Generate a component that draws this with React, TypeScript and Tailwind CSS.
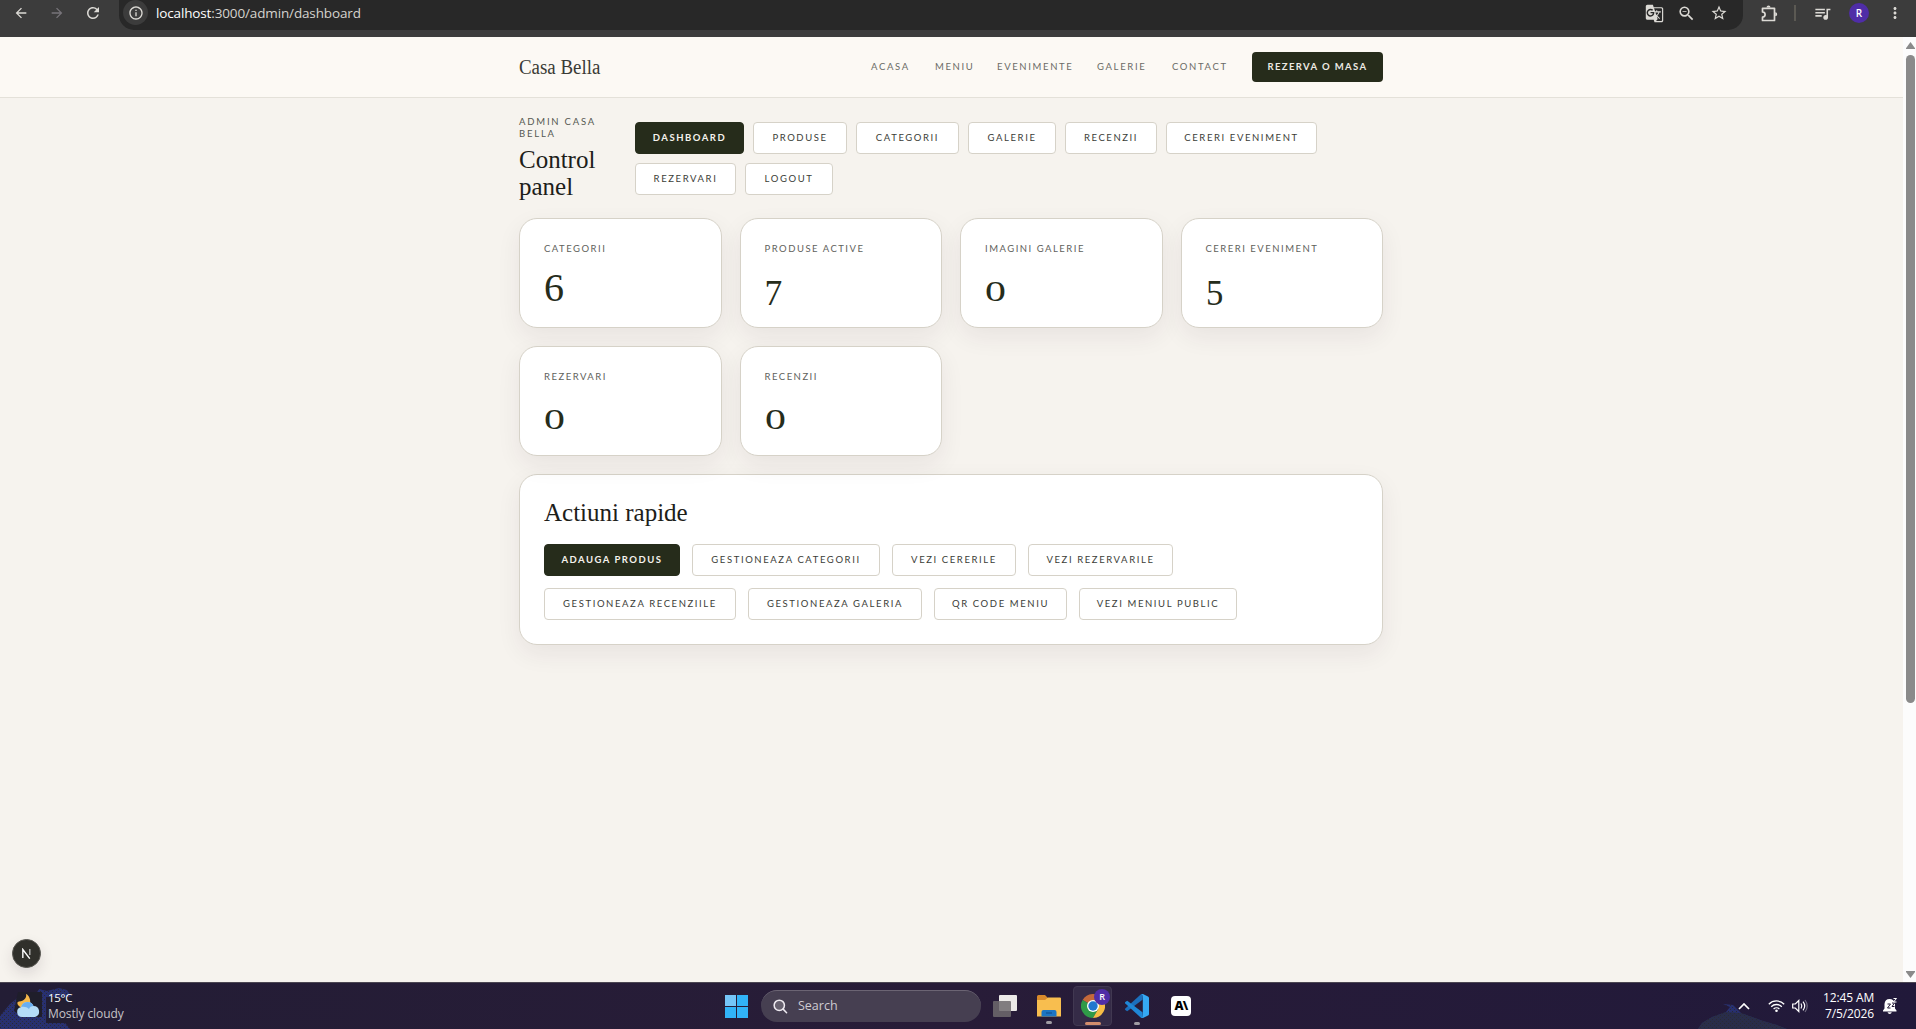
import clsx from "clsx";
import {
  MdArrowBack,
  MdArrowForward,
  MdGTranslate,
  MdInfoOutline,
  MdMoreVert,
  MdQueueMusic,
  MdRefresh,
  MdStarBorder,
  MdZoomOut,
} from "react-icons/md";

interface ButtonItem {
  label: string;
  width: string;
  primary?: boolean;
}

interface StatItem {
  label: string;
  value: number;
  digit: string;
}

const navLinks: ButtonItem[] = [
  { label: "Acasa", width: "w-[39px]" },
  { label: "Meniu", width: "w-[37px]" },
  { label: "Evenimente", width: "w-[75px]" },
  { label: "Galerie", width: "w-[50px]" },
  { label: "Contact", width: "w-[55px]" },
];

const adminLinks: ButtonItem[] = [
  { label: "Dashboard", width: "w-[109px]", primary: true },
  { label: "Produse", width: "w-[94px]" },
  { label: "Categorii", width: "w-[103px]" },
  { label: "Galerie", width: "w-[88px]" },
  { label: "Recenzii", width: "w-[92px]" },
  { label: "Cereri eveniment", width: "w-[151px]" },
  { label: "Rezervari", width: "w-[101px]" },
  { label: "Logout", width: "w-[88px]" },
];

const quickActions: ButtonItem[] = [
  { label: "Adauga produs", width: "w-[136px]", primary: true },
  { label: "Gestioneaza categorii", width: "w-[188px]" },
  { label: "Vezi cererile", width: "w-[124px]" },
  { label: "Vezi rezervarile", width: "w-[145px]" },
  { label: "Gestioneaza recenziile", width: "w-[192px]" },
  { label: "Gestioneaza galeria", width: "w-[174px]" },
  { label: "QR code meniu", width: "w-[133px]" },
  { label: "Vezi meniul public", width: "w-[158px]" },
];

// old-style figures: each digit has its own height and drop
const six = "text-[40px] -translate-y-[2px]";
const zero = "text-[29.5px] scale-x-[1.42] -translate-y-[2px]";
const seven = "text-[35.5px] translate-y-[2px]";
const five = "text-[36.5px] scale-x-[0.95] translate-y-[2px]";

const stats: StatItem[] = [
  { label: "Categorii", value: 6, digit: six },
  { label: "Produse active", value: 7, digit: seven },
  { label: "Imagini galerie", value: 0, digit: zero },
  { label: "Cereri eveniment", value: 5, digit: five },
  { label: "Rezervari", value: 0, digit: zero },
  { label: "Recenzii", value: 0, digit: zero },
];

const PuzzleIcon = () => (
  <svg viewBox="0 0 17 17" className="ml-[18px] size-[17px]" fill="none" stroke="currentColor" strokeWidth="1.700">
    <path d="M1.500 3.300h12v12.200h-12v-3.300a2.600 2.600 0 0 0 0-5.200z" strokeLinejoin="round" />
    <path d="M5.500 2.600a2 2 0 0 1 4 0zM14.200 7.300a2 2 0 0 1 0 4z" fill="currentColor" stroke="none" />
  </svg>
);

const BrowserBar = () => (
  <div className="flex h-[37px] shrink-0 items-start bg-[#3c3c3c] text-[#dcdad5]">
    <div className="flex h-[26px] w-[119px] items-center">
      <MdArrowBack className="ml-[13px] size-4" />
      <MdArrowForward className="ml-5 size-4 text-[#77747a]" />
      <MdRefresh className="ml-[19px] size-[18px]" />
    </div>
    <div className="flex h-[30px] w-[1624px] rounded-b-[15px] bg-[#282828]">
      <div className="ml-1 flex size-[25px] items-center justify-center rounded-full bg-[#3c3c3c]">
        <MdInfoOutline className="size-4" />
      </div>
      <span className="ml-2 font-['Open_Sans',sans-serif] text-[13.5px] leading-[27px] tracking-[-0.14px] text-[#d5d3cf]">
        <span className="text-white">localhost</span>:3000/admin/dashboard
      </span>
      <div className="ml-auto flex h-[26px] items-center">
        <MdGTranslate className="size-[19px]" />
        <MdZoomOut className="ml-[13px] size-[19px]" />
        <MdStarBorder className="mr-[15px] ml-[14px] size-[18px]" />
      </div>
    </div>
    <div className="flex h-[26px] flex-1 items-center">
      <PuzzleIcon />
      <span className="ml-4 h-4 w-0.5 bg-[#5b5953]" />
      <MdQueueMusic className="ml-[17px] size-[19px]" />
      <span className="ml-[17px] flex size-5 items-center justify-center rounded-full bg-[#4f2da7] font-['Open_Sans',sans-serif] text-[10px] font-semibold text-white">
        R
      </span>
      <MdMoreVert className="ml-[17px] size-[18px]" />
    </div>
  </div>
);

const PillButton = ({ item }: { item: ButtonItem }) => (
  <button
    className={clsx(
      "flex h-8 shrink-0 items-center justify-center rounded-[4px] border pt-px text-[9.5px] whitespace-nowrap uppercase",
      item.width,
      item.primary
        ? "border-[#262c1b] bg-[#262c1b] font-bold tracking-[1.5px] text-[#f5f2ed]"
        : "border-[#d6d2c8] bg-white tracking-[1.6px] text-[#3b3d37]",
    )}
  >
    {item.label}
  </button>
);

const SiteHeader = () => (
  <header className="h-[61px] border-b border-[#e4e1d9] bg-[#fcf9f4] pr-px">
    <div className="mx-auto flex h-[60px] w-[864px] items-center">
      <span className="origin-left scale-x-[0.945] pb-px font-['Liberation_Serif',serif] text-[20px] text-[#3a3b35]">
        Casa Bella
      </span>
      <nav className="ml-auto flex gap-[25px] text-[9.5px] text-[#6b6b66] uppercase">
        {navLinks.map((link) => (
          <span
            key={link.label}
            className={clsx("tracking-[1.65px] whitespace-nowrap", link.width)}
          >
            {link.label}
          </span>
        ))}
      </nav>
      <button className="ml-[25px] h-[30px] w-[131px] rounded-[4px] bg-[#262c1b] text-[9.5px] font-bold tracking-[1.4px] whitespace-nowrap text-[#ece9e3] uppercase">
        Rezerva o masa
      </button>
    </div>
  </header>
);

const StatCard = ({ stat }: { stat: StatItem }) => (
  <div className="h-[110px] rounded-[18px] border border-[#d6d2c8] bg-white pt-6 pl-6 shadow-[0_9px_24px_rgba(50,30,50,0.07)]">
    <p className="text-[9.5px] leading-3 tracking-[1.5px] text-[#5f625c] uppercase">
      {stat.label}
    </p>
    <p className="mt-[12px] flex h-9 items-baseline leading-9">
      <span className="inline-block h-9 w-0 text-[40px]" />
      <span
        className={clsx(
          "inline-block origin-left font-['Liberation_Serif',serif] leading-9 text-[#262c1b]",
          stat.digit,
        )}
      >
        {stat.value}
      </span>
    </p>
  </div>
);

const Dashboard = () => (
  <div className="pr-px">
    <main className="mx-auto w-[864px]">
      <div className="flex h-[120px] pt-[18px]">
        <div className="w-[116px]">
          <p className="w-[90px] text-[9.5px] leading-3 tracking-[1.8px] text-[#555851] uppercase">
            Admin Casa Bella
          </p>
          <h1 className="mt-[6px] w-[90px] origin-left font-['Liberation_Serif',serif] text-[25px] leading-[27px] text-[#1d2019]">
            Control panel
          </h1>
        </div>
        <div className="mt-[6px] flex flex-1 flex-wrap content-start gap-[9px]">
          {adminLinks.map((item) => (
            <PillButton key={item.label} item={item} />
          ))}
        </div>
      </div>
      <section className="grid grid-cols-4 gap-[18px]">
        {stats.map((stat) => (
          <StatCard key={stat.label} stat={stat} />
        ))}
      </section>
      <section className="mt-[18px] h-[171px] rounded-[18px] border border-[#d6d2c8] bg-white px-6 pt-6 shadow-[0_9px_24px_rgba(50,30,50,0.07)]">
        <h2 className="origin-left font-['Liberation_Serif',serif] text-[25px] leading-7 text-[#1d2019]">
          Actiuni rapide
        </h2>
        <div className="mt-[17px] flex w-[740px] flex-wrap gap-3">
          {quickActions.map((item) => (
            <PillButton key={item.label} item={item} />
          ))}
        </div>
      </section>
    </main>
  </div>
);

const Scrollbar = () => (
  <div className="flex w-[13px] flex-col items-center bg-[#fcfcfc] pt-[5px] pb-1 pl-0.5">
    <svg className="h-2 w-[9px] shrink-0" viewBox="0 0 9 8" fill="#8a8a8a">
      <path d="M4.500 0 9 6.200V7H0v-.8z" />
    </svg>
    <div className="mt-[5px] h-[648px] w-[9px] shrink-0 rounded-full bg-[#8a8a8a]" />
    <svg className="mt-auto h-[7px] w-[9px] shrink-0" viewBox="0 0 9 7" fill="#8a8a8a">
      <path d="M4.500 7 9 1V0H0v1z" />
    </svg>
  </div>
);

const DevBadge = () => (
  <div className="absolute bottom-[14px] left-3 flex size-[29px] items-center justify-center rounded-full border border-[#55544f] bg-[#30302b] shadow-[0_6px_14px_rgba(50,30,50,0.12)]">
    <svg viewBox="0 0 12 12" className="size-[11px]" fill="none" stroke="#fff" strokeWidth="1.500">
      <path d="M2 11V1.600L9.600 11.600" />
      <path d="M9.600 1v6.500" strokeOpacity=".65" />
    </svg>
  </div>
);

const WeatherIcon = () => (
  <svg viewBox="0 0 25 24" className="h-6 w-[25px]">
    <path d="M10 0c1 4-2 7-7 7.500C1 8 1 9 2 11c3 4 10 4 12-1 1-4-1-9-4-10z" fill="#f5b84a" />
    <path
      d="M6 23a5 5 0 0 1-.8-9.900A6.500 6.500 0 0 1 17.500 12a5.600 5.600 0 0 1 1.500 11z"
      fill="#b4dcf7"
    />
    <path d="M5.200 13.100A6.500 6.500 0 0 1 17.500 12c-2 0-4 1-4.500 3-2-2-5-2.500-7.800-1.900z" fill="#69aef0" />
  </svg>
);

const FolderIcon = () => (
  <svg viewBox="0 0 24 22" className="h-[22px] w-6">
    <path d="M0 1.500Q0 0 1.500 0H8l3 3h3v5H0z" fill="#d98a2b" />
    <path d="M0 5h8l3-2.500h12q1 0 1 1V21.500H0z" fill="#f8be4f" />
    <path d="M4.500 21.500V17q0-2 2-2h11q2 0 2 2v4.500z" fill="#1c75c4" />
    <path d="M9 18h6" stroke="#124f91" strokeWidth="1.200" />
  </svg>
);

const ChromeIcon = () => (
  <svg viewBox="0 0 24 24" className="size-6">
    <path d="M12 12 1.600 6A12 12 0 0 1 22.400 6z" fill="#c4683a" />
    <path d="M12 12 1.600 6A12 12 0 0 0 12 24l5.200-9z" fill="#2f9a48" />
    <path d="M12 6h10.400A12 12 0 0 1 12 24l5.200-9z" fill="#f7bd45" />
    <circle cx="12" cy="12" r="6" fill="#fff" />
    <circle cx="12" cy="12" r="4.700" fill="#2277cf" />
  </svg>
);

const CodeIcon = () => (
  <svg viewBox="0 0 24 24" className="size-6">
    <path d="M17.500 5.700 2.200 17.200.300 16q-.6-.7 0-1.400L16.200 0H18z" fill="#1b6fbd" />
    <path d="M17.500 18.300 2.200 6.800.300 8q-.6.700 0 1.400L16.200 24H18z" fill="#1f87d6" />
    <path d="m16.800.300 1.200-.2 5 2.400q1 .5 1 1.500v16q0 1-1 1.500l-5 2.400-1.200-.2q1 .2 1-1V1.500z" fill="#35a9f4" />
  </svg>
);

const RunningDot = () => (
  <span className="absolute -bottom-[7px] left-1/2 h-[3px] w-1.5 -translate-x-1/2 rounded-full bg-[#a09ca3]" />
);

const Taskbar = () => (
  <footer className="relative flex h-[47px] shrink-0 items-center overflow-hidden border-t border-[#4b4652] bg-linear-to-r from-[#231d35] via-[#281c38] to-[#21193a] font-['Open_Sans',sans-serif]">
    <svg className="absolute bottom-0 left-0 h-[46px] w-[100px]" viewBox="0 0 100 46">
      <defs>
        <pattern id="dots" width="4" height="4" patternUnits="userSpaceOnUse">
          <rect width="4" height="4" fill="#283070" />
          <rect width="1" height="1" fill="#282a31" />
          <rect x="2" y="2" width="1" height="1" fill="#2b2c38" />
        </pattern>
      </defs>
      <path d="M0 46V33l10-12 10-8 16-2 3-5 8 2 12-3 8 2 4 6-9 8v15l8 10z" fill="url(#dots)" />
      <path d="M18 9h24v25H22l-8-6z" fill="#1f1e2b" />
      <path d="M46 14h28v26H46z" fill="#221e33" />
    </svg>
    <svg className="absolute right-[120px] bottom-0 h-[30px] w-[100px]" viewBox="0 0 100 30">
      <path d="m2 30 4-6 10-6 14-5 4-5-7-3 10 1 8 8 14 5 8 3 14 4 10 4z" fill="url(#dots)" />
      <path d="m2 30 4-6 10-6 14-5 15 1 14 5 8 3 14 4 10 4z" fill="#292d36" fillOpacity=".65" />
    </svg>
    <div className="relative flex w-[725px] items-center pl-4">
      <WeatherIcon />
      <div className="ml-[7px] text-[12px] leading-4 tracking-[-0.3px] text-white">
        <p className="text-[11.5px]">15°C</p>
        <p className="tracking-[-0.1px] text-[#c6c3c8]">Mostly cloudy</p>
      </div>
    </div>
    <svg viewBox="0 0 23 23" className="size-[23px]">
      <path d="M0 0h11v11H0z" fill="#75c5f7" />
      <path d="M12 0h11v11H12zM0 12h11v11H0zM12 12h11v11H12z" fill="#31b3f7" />
    </svg>
    <div className="ml-[13px] flex h-8 w-[220px] items-center rounded-full border-t border-[#6b6473] bg-[#463f51] pb-px pl-3">
      <svg viewBox="0 0 16 16" className="size-[15px]" fill="#67616f" stroke="#eeeaf0" strokeWidth="1.600">
        <circle cx="6.700" cy="6.700" r="5.500" />
        <path d="m10.800 10.800 3.700 3.900" strokeLinecap="round" />
      </svg>
      <span className="ml-[10px] pt-px text-[12.5px] text-[#cfcbd2]">Search</span>
    </div>
    <svg viewBox="0 0 24 22" className="ml-3 h-[22px] w-6">
      <rect x="6" width="18" height="16" rx="1" fill="#eceae8" />
      <rect y="6" width="18" height="16" rx="1" fill="#6e6a6d" fillOpacity=".85" />
    </svg>
    <div className="relative ml-5">
      <FolderIcon />
      <RunningDot />
    </div>
    <div className="relative ml-3 flex h-10 w-[39px] rounded-[4px] border border-[#413851] bg-[#352b47]">
      <div className="mt-[7px] ml-[7px]">
        <ChromeIcon />
      </div>
      <span className="absolute top-0.5 right-px flex size-4 items-center justify-center rounded-full bg-[#4f2da7] text-[9px] font-semibold text-white">
        R
      </span>
      <span className="absolute bottom-0 left-[11px] h-[3px] w-4 rounded-full bg-[#d38d6d]" />
    </div>
    <div className="relative ml-[13px]">
      <CodeIcon />
      <RunningDot />
    </div>
    <div className="ml-[22px] flex size-5 items-center justify-center rounded-[4px] bg-white text-[12.5px] font-extrabold tracking-[-0.8px] text-black">
      A\
    </div>
    <div className="relative ml-auto flex items-center text-white">
      <svg viewBox="0 0 12 7" className="h-[7px] w-3" fill="none" stroke="currentColor" strokeWidth="1.700">
        <path d="m1 6 5-5 5 5" />
      </svg>
      <svg viewBox="0 0 17 14" className="ml-[18px] h-[14px] w-[17px]" fill="none" stroke="currentColor" strokeWidth="1.300">
        <path d="M.8 5.200a10.800 10.800 0 0 1 15.400 0M3.200 7.700a7.500 7.500 0 0 1 10.600 0M5.600 10a4.200 4.200 0 0 1 5.800 0" />
        <circle cx="8.500" cy="11.800" r="1.300" fill="currentColor" stroke="none" />
      </svg>
      <svg viewBox="0 0 16 14" className="ml-[7px] h-[14px] w-4" fill="none" stroke="currentColor" strokeWidth="1.200">
        <path d="M.7 5h2.600l3.500-3.500v11L3.300 9H.7zM9 4.500q1.600 2.500 0 5M11 2.700q3.400 4.300 0 8.600" />
        <path d="M13 1q4.500 6 0 12" strokeOpacity=".35" />
      </svg>
      <div className="ml-[15px] w-[51px] text-right text-[12px] leading-4 tracking-[-0.12px] whitespace-nowrap">
        <p>12:45 AM</p>
        <p>7/5/2026</p>
      </div>
      <svg viewBox="0 0 15 16" className="mr-[18px] ml-[9px] h-4 w-[15px]">
        <path d="M0 13.500v-1l1.500-2V6Q2 1 6.500 1T12 6v4.500l1.500 2v1z" fill="#fff" />
        <path d="M4.500 14.200h4.300q-.5 1.800-2.100 1.800t-2.200-1.800z" fill="#fff" />
        <path d="M4.500 6h3l-3 4h3M9 5h2.500L9 8.500h2.500" fill="none" stroke="#241b38" />
        <path d="M10.500.500h3l-3 3.500h3" fill="none" stroke="#fff" />
      </svg>
    </div>
  </footer>
);

const App = () => {
  return (
    <div className="flex h-[1029px] w-[1916px] flex-col overflow-hidden">
      <BrowserBar />
      <div className="flex min-h-0 flex-1">
        <div className="relative w-[1903px] bg-[#f6f3ee] font-['Lato',sans-serif]">
          <SiteHeader />
          <Dashboard />
          <DevBadge />
        </div>
        <Scrollbar />
      </div>
      <Taskbar />
    </div>
  );
};

export default App;
